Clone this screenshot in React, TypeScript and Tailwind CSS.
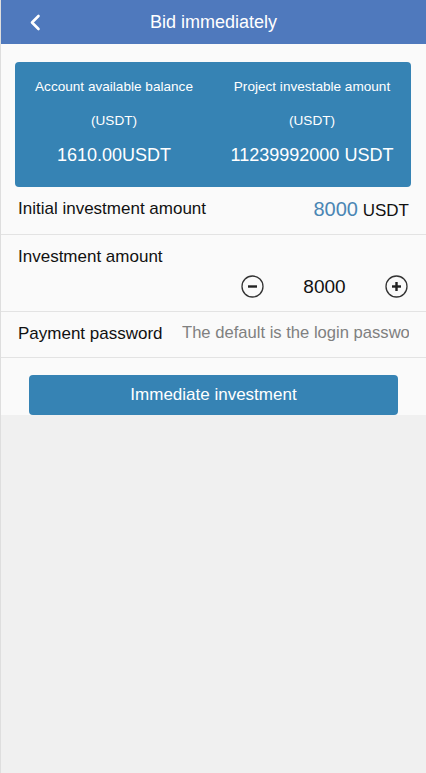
import { FC } from "react";

const StepIcon: FC<{ plus?: boolean }> = ({ plus }) => (
  <svg width="23" height="23" viewBox="0 0 23 23">
    <circle cx="11.5" cy="11.5" r="10.5" fill="none" stroke="#333" strokeWidth="1.3" />
    <rect x="7" y="10.3" width="9" height="2.4" fill="#222" />
    {plus && <rect x="10.3" y="7" width="2.4" height="9" fill="#222" />}
  </svg>
);

export default function App() {
  return (
    <div
      className="min-h-[773px] bg-[#f0f0f0] border-l border-[#dedede]"
      style={{ fontFamily: '"Liberation Sans", Arial, sans-serif' }}
    >
      <div className="bg-[#fafafa]">
        <header className="h-[44px] bg-[#4f79bd] flex items-center relative">
          <svg className="absolute left-[28px] top-[14px]" width="12" height="17" viewBox="0 0 12 17">
            <path d="M9.5 2 L3 8.5 L9.5 15" fill="none" stroke="#fff" strokeWidth="2.6" strokeLinecap="round" strokeLinejoin="round" />
          </svg>
          <h1 className="w-full text-center text-white text-[18px]">Bid immediately</h1>
        </header>

        <div className="pt-[18px] pl-[14px] pr-[15px]">
          <div className="bg-[#3683b4] rounded-[4px] text-white grid grid-cols-2 pt-[8px] pb-[15px]">
            <div className="text-center">
              <p className="text-[13.6px] leading-[34px]">Account available balance</p>
              <p className="text-[13.6px] leading-[34px]">(USDT)</p>
              <p className="text-[18px] leading-[34px]">1610.00USDT</p>
            </div>
            <div className="text-center">
              <p className="text-[13.6px] leading-[34px]">Project investable amount</p>
              <p className="text-[13.6px] leading-[34px]">(USDT)</p>
              <p className="text-[18px] leading-[34px]">11239992000 USDT</p>
            </div>
          </div>
        </div>

        <div className="h-[48px] flex items-center justify-between pl-[17px] pr-[17px] pb-[4px] border-b border-[#e3e3e3]">
          <span className="text-[17px] text-[#111]">Initial investment amount</span>
          <span className="text-[17px] text-[#111]">
            <span className="text-[20px] text-[#4a86b4]">8000</span> USDT
          </span>
        </div>

        <div className="h-[77px] pl-[17px] pr-[17px] border-b border-[#e3e3e3] flex flex-col">
          <span className="text-[17px] text-[#111] pt-[9px]">Investment amount</span>
          <div className="flex items-center justify-end mt-[3px] pr-[1px]">
            <StepIcon />
            <span className="w-[121px] text-center text-[19px] text-[#111]">8000</span>
            <StepIcon plus />
          </div>
        </div>

        <div className="h-[46px] flex items-center pl-[17px] pr-[17px] pb-[2px] border-b border-[#e3e3e3]">
          <span className="text-[17px] text-[#111] shrink-0 w-[164px]">Payment password</span>
          <input
            className="flex-1 min-w-0 bg-transparent outline-none text-[16.6px] placeholder:text-[#808080]"
            placeholder="The default is the login password"
            type="password"
          />
        </div>

        <div className="pt-[17px] pl-[28px] pr-[28px]">
          <button className="w-full h-[40px] bg-[#3683b4] text-white text-[17px] rounded-[4px]">
            Immediate investment
          </button>
        </div>
      </div>
    </div>
  );
}
